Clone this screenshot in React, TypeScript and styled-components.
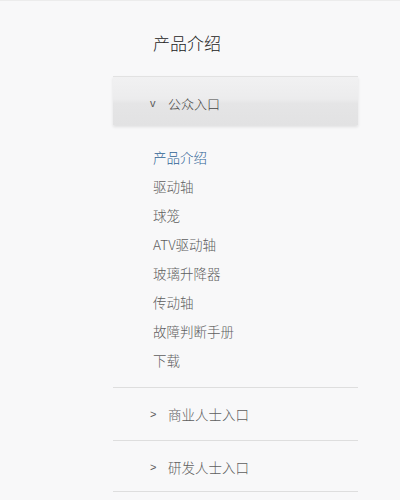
import React from "react";
import styled, { createGlobalStyle } from "styled-components";

const Global = createGlobalStyle`
  html, body { margin: 0; padding: 0; background: #f8f8f9; }
  body { font-family: "Noto Sans CJK SC", "Liberation Sans", sans-serif; font-weight: 300; }
`;

const Page = styled.div`
  width: 400px;
  height: 500px;
  background: #f8f8f9;
  overflow: hidden;
  border-top: 1px solid #ececec;
  box-sizing: border-box;
`;

const Panel = styled.nav`
  margin-left: 113px;
  width: 245px;
  display: flex;
  flex-direction: column;
`;

const Title = styled.h1`
  margin: 0;
  height: 75px;
  padding: 30px 0 0 40px;
  box-sizing: border-box;
  font-size: 17px;
  line-height: 24px;
  font-weight: 300;
  color: #222;
`;

const GroupHeader = styled.div`
  height: 49px;
  display: flex;
  align-items: center;
  padding: 4px 0 0 37px;
  box-sizing: border-box;
  gap: 10px;
  border-top: 1px solid #e2e2e2;
  background: linear-gradient(#f1f1f2 0%, #ececed 45%, #e5e5e6 55%, #e2e2e3 100%);
  box-shadow: 0 2px 3px rgba(0, 0, 0, 0.1);
  color: #444;
  font-size: 13px;
`;

const Arrow = styled.span`
  font-family: "Liberation Sans", sans-serif;
  font-size: 11px;
  color: #5a5a5a;
  width: 8px;
`;

const ItemList = styled.ul`
  list-style: none;
  margin: 0;
  padding: 18px 0 12px 40px;
  display: flex;
  flex-direction: column;
`;

const Item = styled.li<{ $active?: boolean }>`
  height: 29px;
  line-height: 29px;
  font-size: 13.5px;
  color: ${(p) => (p.$active ? "#2f6395" : "#5e5e5e")};
`;

const Row = styled.div`
  height: 52px;
  border-top: 1px solid #dedede;
  display: flex;
  align-items: center;
  padding-left: 37px;
  gap: 10px;
  font-size: 13.5px;
  color: #5e5e5e;
`;

const End = styled.div`
  margin-top: -2px;
  border-top: 1px solid #dedede;
`;

const items = ["产品介绍", "驱动轴", "球笼", "ATV驱动轴", "玻璃升降器", "传动轴", "故障判断手册", "下载"];

export default function App() {
  return (
    <Page>
      <Global />
      <Panel>
        <Title>产品介绍</Title>
        <GroupHeader>
          <Arrow>v</Arrow>
          <span>公众入口</span>
        </GroupHeader>
        <ItemList>
          {items.map((t, i) => (
            <Item key={t} $active={i === 0}>{t}</Item>
          ))}
        </ItemList>
        <Row>
          <Arrow>&gt;</Arrow>
          <span>商业人士入口</span>
        </Row>
        <Row>
          <Arrow>&gt;</Arrow>
          <span>研发人士入口</span>
        </Row>
        <End />
      </Panel>
    </Page>
  );
}
